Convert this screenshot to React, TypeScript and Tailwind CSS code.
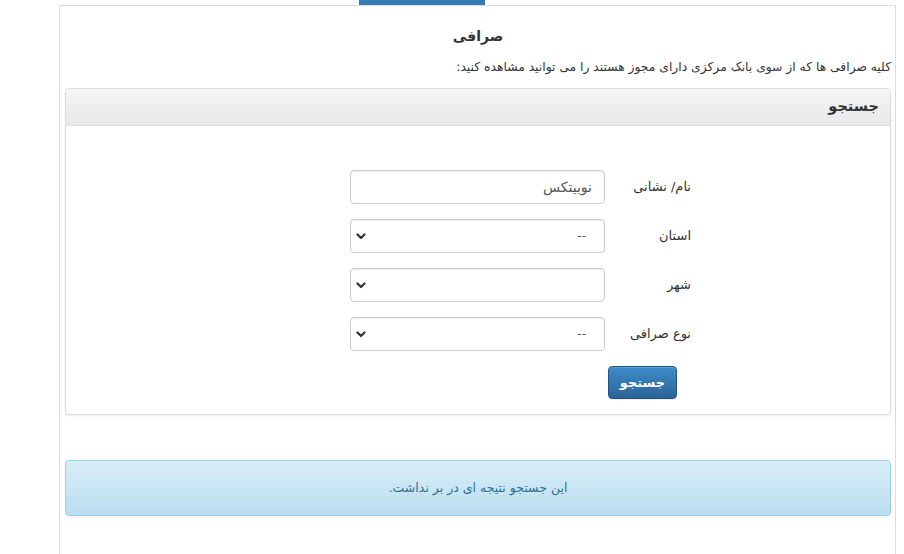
import React from "react";

function Chevron() {
  return (
    <svg width="10" height="7" viewBox="0 0 10 7" className="block">
      <path d="M1.5 1.5 L5 5 L8.5 1.5" fill="none" stroke="#333" strokeWidth="2.2" strokeLinecap="round" strokeLinejoin="round" />
    </svg>
  );
}

function SelectBox({ value }: { value: string }) {
  return (
    <div className="w-[255px] h-[34px] border border-[#ccc] rounded-[4px] bg-white shadow-[inset_0_1px_1px_rgba(0,0,0,0.075)] flex items-center justify-between pr-[18px] pl-[5px]">
      <span className="text-[#555] text-[12px]">{value}</span>
      <Chevron />
    </div>
  );
}

function Row({ label, children }: { label: string; children: React.ReactNode }) {
  return (
    <div className="flex items-center">
      <div className="w-[86px] text-[13px] text-[#333]">{label}</div>
      {children}
    </div>
  );
}

export default function App() {
  return (
    <div className="min-h-[554px] bg-white text-[#333] font-['DejaVu_Sans',sans-serif]">
      <div className="h-[5px] w-[126px] bg-[#337ab7] ml-[359px]" />
      <div dir="rtl" className="ml-[59px] w-[837px] h-[549px] border-t border-l border-r border-[#dcdcdc] pl-[5px] pr-[4px]">
        <div className="h-[20px]" />
        <h1 className="text-center text-[14px] font-bold leading-[20px]">صرافی</h1>
        <p className="mt-[11px] text-[12.3px] leading-[20px]">کلیه صرافی ها که از سوی بانک مرکزی دارای مجوز هستند را می توانید مشاهده کنید:</p>
        <div className="mt-[11px] border border-[#ddd] rounded-[4px] shadow-[0_1px_2px_rgba(0,0,0,0.08)] bg-white">
          <div className="h-[37px] bg-gradient-to-b from-[#f5f5f5] to-[#e8e8e8] border-b border-[#ddd] rounded-t-[3px] flex items-center pr-[11px]">
            <span className="text-[14.5px] font-bold">جستجو</span>
          </div>
          <div className="pt-[44px] pb-[15px] pr-[199px] flex flex-col gap-[15px]">
            <Row label="نام/ نشانی">
              <div className="w-[255px] h-[34px] border border-[#ccc] rounded-[4px] bg-white shadow-[inset_0_1px_1px_rgba(0,0,0,0.075)] flex items-center pr-[12px]">
                <span className="text-[#555] text-[14px]">نوبیتکس</span>
              </div>
            </Row>
            <Row label="استان">
              <SelectBox value="--" />
            </Row>
            <Row label="شهر">
              <SelectBox value="" />
            </Row>
            <Row label="نوع صرافی">
              <SelectBox value="--" />
            </Row>
            <div className="flex pr-[14px]">
              <button className="w-[69px] h-[33px] rounded-[4px] border border-[#245580] bg-gradient-to-b from-[#3c8dcc] to-[#2a6496] text-white text-[13px] font-semibold shadow-[inset_0_1px_0_rgba(255,255,255,0.15),0_1px_1px_rgba(0,0,0,0.075)]">
                جستجو
              </button>
            </div>
          </div>
        </div>
        <div className="mt-[45px] h-[56px] border border-[#9acfea] rounded-[4px] bg-gradient-to-b from-[#d9edf7] to-[#b9def0] flex items-center justify-center shadow-[inset_0_1px_0_rgba(255,255,255,0.25),0_1px_2px_rgba(0,0,0,0.05)]">
          <span className="text-[#31708f] text-[12.5px]">این جستجو نتیجه ای در بر نداشت.</span>
        </div>
      </div>
    </div>
  );
}
